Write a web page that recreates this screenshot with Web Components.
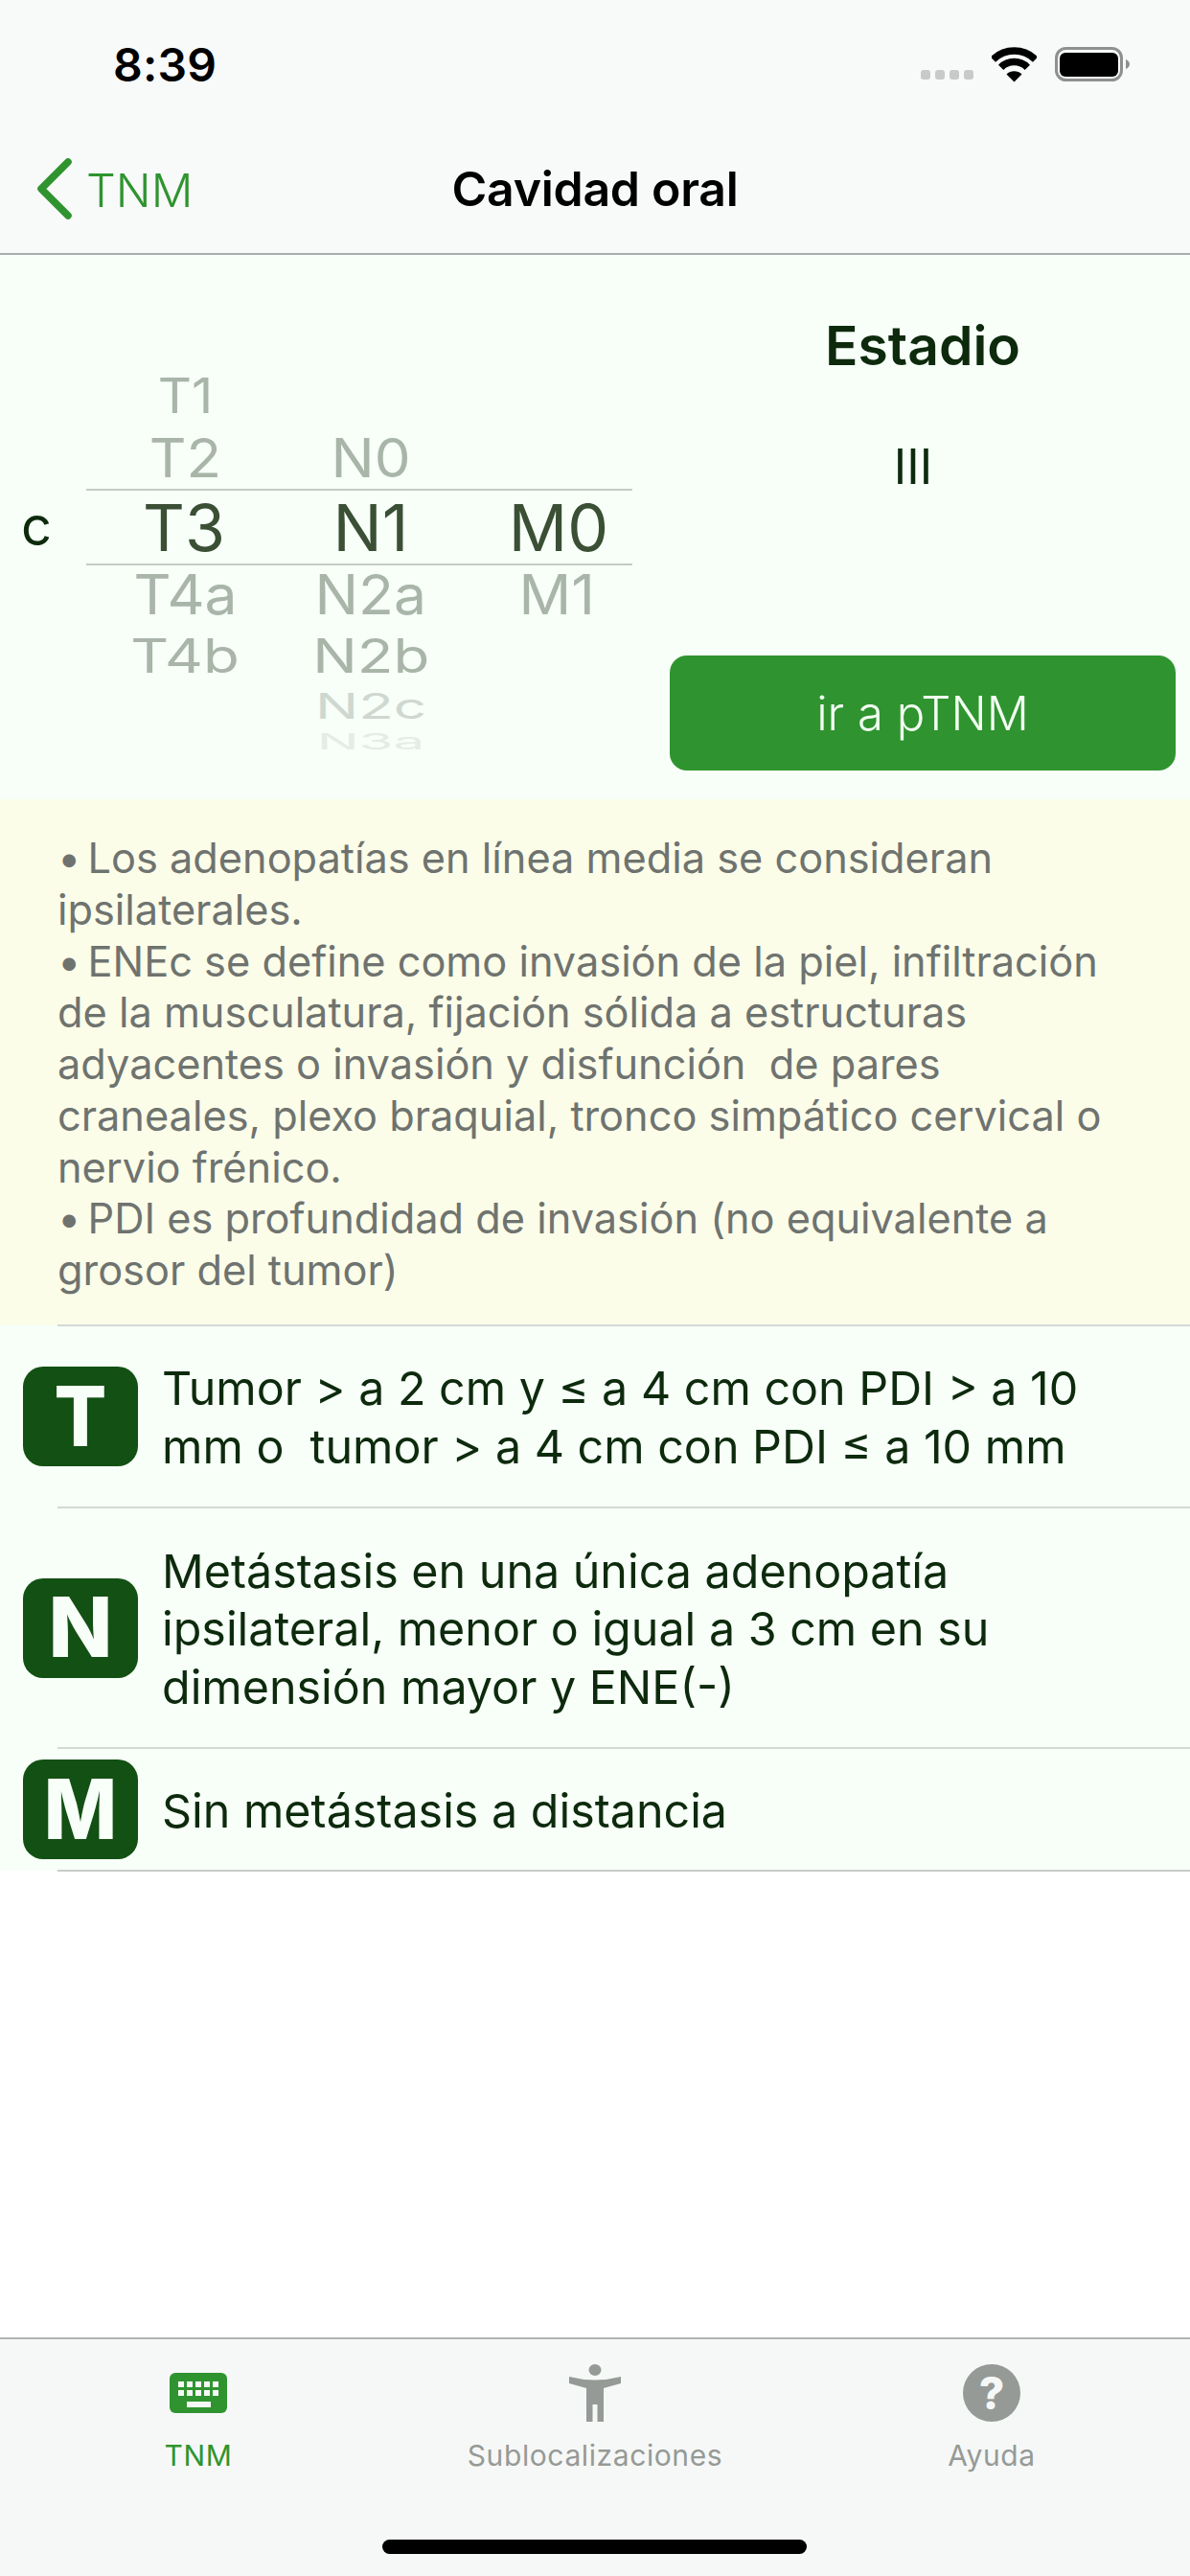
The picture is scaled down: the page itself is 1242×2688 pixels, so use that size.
<!DOCTYPE html>
<html lang="es"><head><meta charset="utf-8"><title>Cavidad oral</title>
<style>
html,body{margin:0;padding:0;background:#fff;font-family:Inter,"Liberation Sans",sans-serif}
body{width:1242px;height:2688px;overflow:hidden;display:flex;flex-direction:column}
.bl{margin-right:-5px}
</style></head><body>
<app-header></app-header>
<staging-panel></staging-panel>
<note-box><span class="bl">•</span> Los adenopatías en línea media se consideran<br>ipsilaterales.<br><span class="bl">•</span> ENEc se define como invasión de la piel, infiltración<br>de la musculatura, fijación sólida a estructuras<br>adyacentes o invasión y disfunción&nbsp; de pares<br>craneales, plexo braquial, tronco simpático cervical o<br>nervio frénico.<br><span class="bl">•</span> PDI es profundidad de invasión (no equivalente a<br>grosor del tumor)</note-box>
<tnm-list>
<tnm-row letter="T" style="height:190px">Tumor &gt; a 2 cm y ≤ a 4 cm con PDI &gt; a 10<br>mm o&nbsp; tumor &gt; a 4 cm con PDI ≤ a 10 mm</tnm-row>
<tnm-row letter="N" style="height:251px">Metástasis en una única adenopatía<br>ipsilateral, menor o igual a 3 cm en su<br>dimensión mayor y ENE(-)</tnm-row>
<tnm-row letter="M" last style="height:128px">Sin metástasis a distancia</tnm-row>
</tnm-list>
<div style="flex:1"></div>
<tab-bar></tab-bar>
<script>
function def(name,html){customElements.define(name,class extends HTMLElement{constructor(){super();this.attachShadow({mode:'open'}).innerHTML=typeof html==='function'?html(this):html}})}
def('app-header',`<style>
:host{display:block;height:264px;background:#f8f9f9;border-bottom:2px solid #a9aeaa;box-sizing:content-box;font-family:Inter,sans-serif;flex:none}
.status{height:132px;display:flex;align-items:center;position:relative;padding-left:118px;box-sizing:border-box}
.time{font-size:48px;font-weight:600;color:#000;margin-top:3px;letter-spacing:.2px}
.right{margin-left:auto;display:flex;align-items:center;padding-right:61px;margin-top:2px}
.dots{display:flex;gap:5px;margin-top:22px;margin-right:19px}.dots i{width:10px;height:10px;border-radius:3px;background:#c8caca}
.wifi{margin-right:19px}
.nav{height:132px;display:flex;align-items:center;position:relative;justify-content:center;margin-top:-2px}
.back{position:absolute;left:38px;top:2px;height:100%;display:flex;align-items:center;color:#2f942f;font-size:48.5px;font-weight:300}
.back svg{margin-right:15px;margin-top:-2px}
.title{font-size:50px;font-weight:600;color:#000;margin-top:2px;letter-spacing:-.3px}
</style>
<div class="status"><span class="time">8:39</span><div class="right"><div class="dots"><i></i><i></i><i></i><i></i></div>
<svg class="wifi" width="47" height="37" viewBox="0 0 47 37"><g fill="none" stroke="#000" stroke-width="7.5"><path d="M1.400 13.100A31.500 31.500 0 0 1 45.600 13.100"/><path d="M9.700 21.300A19.500 19.500 0 0 1 37.300 21.300"/></g><path d="M23.500 36.500L15.500 28.500A11.300 11.300 0 0 1 31.500 28.500Z"/></svg>
<svg width="80" height="36" viewBox="0 0 80 36"><rect x="1.500" y="1.500" width="68" height="33" rx="10" fill="none" stroke="#8e8f8f" stroke-width="3"/><rect x="5" y="6" width="61" height="25" rx="6"/><path d="M74 13Q78 15 78 18T74 23Z" fill="#8e8f8f"/></svg>
</div></div>
<div class="nav"><div class="back"><svg width="37" height="64" viewBox="0 0 37 64"><path d="M33 4L5 32L33 60" fill="none" stroke="#2f942f" stroke-width="7.500" stroke-linecap="round" stroke-linejoin="round"/></svg>TNM</div><div class="title">Cavidad oral</div></div>`);
def('tnm-picker',`<style>
:host{display:block;font-family:Inter,sans-serif}
.wheel{display:grid;width:570px;grid-template-columns:204px 186px 180px;grid-template-rows:62px 67px 80px 60px 68px 38px 34px;color:#a9b5a9;font-size:60px;line-height:1}
.wheel>span{display:flex;align-items:center;justify-content:center;white-space:nowrap}
.wheel>span:nth-child(3n){padding-left:26px}
.wheel>span:nth-child(3n+1) b{margin-left:3px}
.wheel>span:nth-child(3n) b{margin-right:3px}
.wheel>span.sel{border-style:solid;border-color:#c4cbc6;border-width:2px 0;color:#3a4f34;font-size:68px;box-sizing:border-box}
b{font-weight:400;display:inline-block}
.y1 b{transform:scale(.91,.85)}.y2 b{transform:scaleY(.94)}.y4 b{transform:scale(1.01,.95)}.y5 b{transform:scale(1.03,.82)}
.y6 b{transform:scale(1,.61);color:#cfd8d0}.y7 b{transform:scale(.97,.39);color:#e6ebe6}
</style><div class="wheel">
<span class="y1"><b>T1</b></span><span></span><span></span>
<span class="y2"><b>T2</b></span><span class="y2"><b>N0</b></span><span></span>
<span class="sel">T3</span><span class="sel">N1</span><span class="sel">M0</span>
<span class="y4"><b>T4a</b></span><span class="y4"><b>N2a</b></span><span class="y4"><b>M1</b></span>
<span class="y5"><b>T4b</b></span><span class="y5"><b>N2b</b></span><span></span>
<span></span><span class="y6"><b>N2c</b></span><span></span>
<span></span><span class="y7"><b>N3a</b></span><span></span>
</div>`);
def('staging-panel',`<style>
:host{display:flex;height:568px;flex:none;background:#f7fff8;font-family:Inter,sans-serif;color:#0d2a0d;position:relative}
.c{width:22px}.cl{font-size:56px;width:68px;line-height:1;margin-top:255px;color:#0d2a0d}
tnm-picker{margin-top:115px}
.right{position:absolute;left:699px;top:0;width:528px;height:100%;display:flex;flex-direction:column;align-items:center}
h2{margin:61px 0 0;font-size:57px;font-weight:600;line-height:68px;color:#0d2a0d}
.st{font-size:50px;line-height:60px;margin-top:62px;margin-right:20px;font-weight:400}
.spacer{flex:1}
ir-button{margin-bottom:30px}
</style><div class="c"></div><div class="cl">c</div><tnm-picker></tnm-picker>
<div class="right"><h2>Estadio</h2><div class="st">III</div><div class="spacer"></div><ir-button>ir a pTNM</ir-button></div>`);
def('ir-button',`<style>
:host{display:flex;width:528px;height:120px;background:#2f942f;border-radius:18px;color:#f2fff2;align-items:center;justify-content:center;font:300 49px Inter,sans-serif}
</style><slot></slot>`);
def('note-box',`<style>
:host{display:block;height:549px;flex:none;box-sizing:border-box;background:#fbfde9;padding:35px 0 0 60px;color:#6f736f;font:400 43.3px/53.75px Inter,sans-serif;white-space:nowrap}
</style><slot></slot>`);
def('tnm-list',`<style>
:host{display:block;background:#f7fff8;flex:none}
</style><slot></slot>`);
def('tnm-row',h=>`<style>
:host{display:flex;align-items:center;box-sizing:border-box;padding-left:24px;gap:25px;position:relative;color:#0d2a0d;font:400 48.4px/60.6px Inter,sans-serif;white-space:nowrap}
:host::before{content:"";position:absolute;left:60px;right:0;top:-1px;height:2px;background:#d4d9d5}
:host([last])::after{content:"";position:absolute;left:60px;right:0;bottom:-1px;height:2px;background:#c9cdca}
.b{width:120px;height:104px;flex:none;border-radius:21px;background:#135013;color:#f7fff8;font-weight:800;font-size:81px;display:flex;align-items:center;justify-content:center;line-height:1}
.b span{display:inline-block;transform:scale(${h.getAttribute('letter')==='N'?1.08:1},1.07)}
.t{padding-top:4px}
</style><div class="b"><span>${h.getAttribute('letter')}</span></div><div class="t"><slot></slot></div>`);
def('tab-bar',`<style>
:host{display:block;height:249px;flex:none;box-sizing:border-box;background:#f6f8f7;border-top:2px solid #b0b4b1;position:relative;font-family:Inter,sans-serif}
.tabs{display:grid;grid-template-columns:414px 414px 414px}
.tab{display:flex;flex-direction:column;align-items:center;color:#959a96;font-size:30px;letter-spacing:.6px}
.i{height:60px;margin-top:26px;margin-bottom:17px;display:flex;align-items:center;justify-content:center}
.l{line-height:36px}
.on{color:#2f942f}
.q{width:60px;height:60px;border-radius:50%;background:#959a96;color:#f6f8f7;font-weight:800;font-size:46px;display:flex;align-items:center;justify-content:center;letter-spacing:0}
.home{position:absolute;left:399px;top:209px;width:443px;height:15px;border-radius:8px;background:#000}
</style><div class="tabs">
<div class="tab on"><div class="i"><svg width="60" height="42" viewBox="0 0 60 42"><rect width="60" height="42" rx="6" fill="#2f942f"/><g fill="#f6f8f7"><rect x="9" y="9" width="6" height="6"/><rect x="18" y="9" width="6" height="6"/><rect x="27" y="9" width="6" height="6"/><rect x="36" y="9" width="6" height="6"/><rect x="45" y="9" width="6" height="6"/><rect x="9" y="18" width="6" height="6"/><rect x="18" y="18" width="6" height="6"/><rect x="27" y="18" width="6" height="6"/><rect x="36" y="18" width="6" height="6"/><rect x="45" y="18" width="6" height="6"/><rect x="18" y="30" width="25" height="6"/></g></svg></div><div class="l">TNM</div></div>
<div class="tab"><div class="i"><svg width="54" height="60" viewBox="0 0 54 60"><g fill="#959a96"><ellipse cx="27" cy="6" rx="6.500" ry="6"/><path d="M0 13Q27 20 54 13V20L36 25V60H29.500V42H24.500V60H18V25L0 20Z"/></g></svg></div><div class="l">Sublocalizaciones</div></div>
<div class="tab"><div class="i"><div class="q">?</div></div><div class="l">Ayuda</div></div>
</div><div class="home"></div>`);
</script>
</body></html>
